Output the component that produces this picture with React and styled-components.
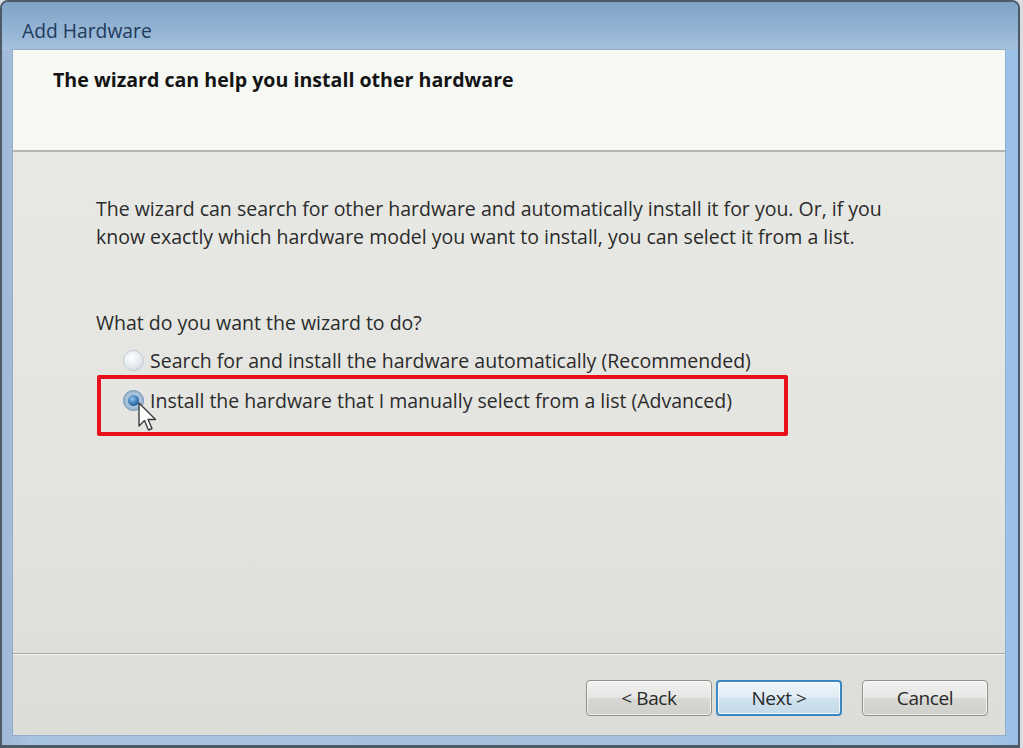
import React from "react";
import styled, { createGlobalStyle } from "styled-components";

const Global = createGlobalStyle`
  html, body { margin: 0; padding: 0; background: #d5d9dd; }
  body { width: 1023px; height: 748px; overflow: hidden; font-family: "Open Sans", "Noto Sans", sans-serif; }
  #root { width: 1023px; height: 748px; }
`;

const Screen = styled.div`
  width: 1023px;
  height: 748px;
  display: flex;
  background: #d9dde2;
`;

const Window = styled.div`
  width: 1020px;
  height: 748px;
  border: 2px solid #4d5a66;
  border-bottom: 3px solid #4d5a66;
  border-radius: 8px 8px 0 0;
  background: linear-gradient(90deg, #9fb9d6 0%, #a9c3e2 3%, #a6c0dc 50%, #a7c3e3 97%, #98c0e8 100%);
  display: flex;
  flex-direction: column;
  box-sizing: border-box;
  overflow: hidden;
`;

const TitleBar = styled.div`
  height: 48px;
  flex: none;
  display: flex;
  align-items: center;
  padding-left: 20px;
  padding-top: 8px;
  box-sizing: border-box;
  background: linear-gradient(180deg, #7ea2c6 0%, #8fb0d1 45%, #a5c1dc 100%);
  color: #1e3a5c;
  font-size: 19.3px;
`;

const Client = styled.div`
  flex: 1;
  margin: 0 13px 10px 11px;
  display: flex;
  flex-direction: column;
  background: linear-gradient(180deg, #e9eae6 0%, #e4e5e1 60%, #dcddd8 100%);
  position: relative;
  box-shadow: 0 0 0 1px rgba(120, 140, 160, 0.35);
`;

const Header = styled.div`
  flex: none;
  height: 102px;
  background: #f5f8f3;
  border-bottom: 2px solid #b4b5b1;
  padding: 16px 0 0 40px;
  box-sizing: border-box;
`;

const HeaderTitle = styled.div`
  font-weight: 700;
  font-size: 19.6px;
  color: #141414;
`;

const Body = styled.div`
  flex: 1;
  padding: 43px 0 0 83px;
  display: flex;
  flex-direction: column;
  color: #2b2b2b;
  font-size: 19.5px;
`;

const Paragraph = styled.p`
  margin: 0;
  line-height: 28px;
  width: 880px;
`;

const Question = styled.div`
  margin-top: 58px;
  line-height: 28px;
`;

const Options = styled.div`
  margin-top: 9px;
  padding-left: 27px;
  display: flex;
  flex-direction: column;
  gap: 12px;
`;

const Option = styled.label`
  display: flex;
  align-items: center;
  gap: 6px;
  height: 28px;
`;

const Radio = styled.span`
  width: 21px;
  height: 21px;
  border-radius: 50%;
  flex: none;
  box-sizing: border-box;
  display: flex;
  align-items: center;
  justify-content: center;
  border: 1px solid ${(p) => (p.$checked ? "#6f8fae" : "#c0c8d0")};
  background: ${(p) =>
    p.$checked
      ? "radial-gradient(circle at 50% 50%, #cfe0ee 0%, #9db8d2 70%, #8ea9c4 100%)"
      : "radial-gradient(circle at 40% 35%, #ffffff 0%, #e8edf2 45%, #c9d2db 100%)"};
  &::after {
    content: "";
    display: ${(p) => (p.$checked ? "block" : "none")};
    width: 11px;
    height: 11px;
    border-radius: 50%;
    background: radial-gradient(circle at 40% 35%, #8fc6ef 0%, #2f6ea8 60%, #1d4f86 100%);
  }
`;

const Highlight = styled.div`
  position: absolute;
  left: 84px;
  top: 325px;
  width: 691px;
  height: 61px;
  border: 4px solid #e8101c;
  box-sizing: border-box;
  border-radius: 2px;
  pointer-events: none;
`;

const Cursor = styled.svg`
  position: absolute;
  left: 125px;
  top: 352px;
`;

const Footer = styled.div`
  height: 82px;
  flex: none;
  border-top: 1px solid #a9aaa6;
  box-shadow: inset 0 1px 0 #f6f6f3;
  display: flex;
  align-items: flex-start;
  justify-content: flex-end;
  padding: 26px 17px 0 0;
  box-sizing: border-box;
`;

const Button = styled.button`
  width: 126px;
  height: 36px;
  margin-left: ${(p) => p.$gap || 0}px;
  border-radius: 4px;
  font-family: "Open Sans", "Noto Sans", sans-serif;
  font-size: 19px;
  letter-spacing: -0.4px;
  color: #2a2a2a;
  border: ${(p) => (p.$primary ? "2px solid #3b88c4" : "1.5px solid #8e8f8c")};
  background: ${(p) =>
    p.$primary
      ? "linear-gradient(180deg, #eef5fa 0%, #e0ecf5 48%, #cfe1ee 52%, #c5dae9 100%)"
      : "linear-gradient(180deg, #f1f1ef 0%, #e6e6e4 48%, #d8d8d5 52%, #cfcfcc 100%)"};
  box-shadow: inset 0 0 0 1px rgba(255, 255, 255, 0.7);
  padding: 0;
  box-sizing: border-box;
`;

export default function App() {
  return (
    <>
      <Global />
      <Screen>
        <Window>
          <TitleBar>Add Hardware</TitleBar>
          <Client>
            <Header>
              <HeaderTitle>The wizard can help you install other hardware</HeaderTitle>
            </Header>
            <Body>
              <Paragraph>
                The wizard can search for other hardware and automatically install it for you. Or, if you
                <br />
                know exactly which hardware model you want to install, you can select it from a list.
              </Paragraph>
              <Question>What do you want the wizard to do?</Question>
              <Options>
                <Option>
                  <Radio />
                  Search for and install the hardware automatically (Recommended)
                </Option>
                <Option>
                  <Radio $checked />
                  Install the hardware that I manually select from a list (Advanced)
                </Option>
              </Options>
            </Body>
            <Footer>
              <Button>&lt; Back</Button>
              <Button $primary $gap={4}>Next &gt;</Button>
              <Button $gap={20}>Cancel</Button>
            </Footer>
            <Highlight />
            <Cursor width="20" height="30" viewBox="0 0 20 30">
              <path
                d="M1 1 L1 24 L6.5 18.5 L10.5 28 L14 26.5 L10 17.5 L17.5 17.5 Z"
                fill="#ffffff"
                stroke="#3a3a3a"
                strokeWidth="1.4"
                strokeLinejoin="round"
              />
            </Cursor>
          </Client>
        </Window>
      </Screen>
    </>
  );
}
